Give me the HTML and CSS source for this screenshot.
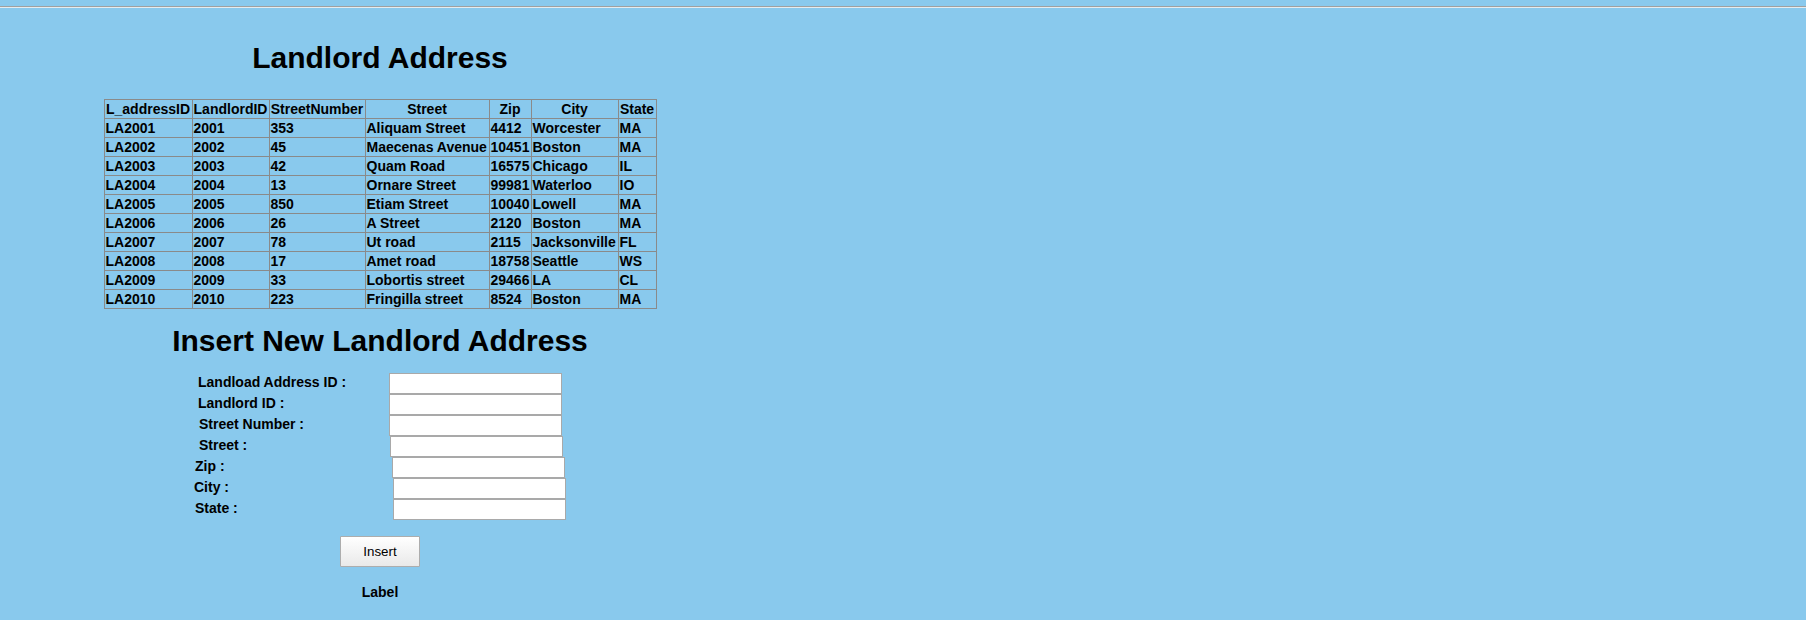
FILE: index.html
```html
<!DOCTYPE html>
<html>
<head>
<meta charset="utf-8">
<title>Landlord Address</title>
<link rel="stylesheet" href="styles.css">
</head>
<body>
<div class="topline"></div>
<div class="page">
  <h1 class="title">Landlord Address</h1>
  <table class="grid">
    <thead>
      <tr><th class="c1">L_addressID</th><th class="c2">LandlordID</th><th class="c3">StreetNumber</th><th class="c4">Street</th><th class="c5">Zip</th><th class="c6">City</th><th class="c7">State</th></tr>
    </thead>
    <tbody>
      <tr><td>LA2001</td><td>2001</td><td>353</td><td>Aliquam Street</td><td>4412</td><td>Worcester</td><td>MA</td></tr>
      <tr><td>LA2002</td><td>2002</td><td>45</td><td>Maecenas Avenue</td><td>10451</td><td>Boston</td><td>MA</td></tr>
      <tr><td>LA2003</td><td>2003</td><td>42</td><td>Quam Road</td><td>16575</td><td>Chicago</td><td>IL</td></tr>
      <tr><td>LA2004</td><td>2004</td><td>13</td><td>Ornare Street</td><td>99981</td><td>Waterloo</td><td>IO</td></tr>
      <tr><td>LA2005</td><td>2005</td><td>850</td><td>Etiam Street</td><td>10040</td><td>Lowell</td><td>MA</td></tr>
      <tr><td>LA2006</td><td>2006</td><td>26</td><td>A Street</td><td>2120</td><td>Boston</td><td>MA</td></tr>
      <tr><td>LA2007</td><td>2007</td><td>78</td><td>Ut road</td><td>2115</td><td>Jacksonville</td><td>FL</td></tr>
      <tr><td>LA2008</td><td>2008</td><td>17</td><td>Amet road</td><td>18758</td><td>Seattle</td><td>WS</td></tr>
      <tr><td>LA2009</td><td>2009</td><td>33</td><td>Lobortis street</td><td>29466</td><td>LA</td><td>CL</td></tr>
      <tr><td>LA2010</td><td>2010</td><td>223</td><td>Fringilla street</td><td>8524</td><td>Boston</td><td>MA</td></tr>
    </tbody>
  </table>
  <h2 class="title title-insert">Insert New Landlord Address</h2>
  <form class="form">
    <div class="row"><label class="lbl lbl-1">Landload Address ID :</label><input class="field" type="text"></div>
    <div class="row"><label class="lbl lbl-1">Landlord ID :</label><input class="field" type="text"></div>
    <div class="row"><label class="lbl lbl-3">Street Number :</label><input class="field" type="text"></div>
    <div class="row"><label class="lbl lbl-4">Street :</label><input class="field" type="text"></div>
    <div class="row"><label class="lbl lbl-5">Zip :</label><input class="field" type="text"></div>
    <div class="row"><label class="lbl lbl-6">City :</label><input class="field" type="text"></div>
    <div class="row"><label class="lbl lbl-7">State :</label><input class="field" type="text"></div>
  </form>
  <button class="btn" type="button">Insert</button>
  <span class="msg">Label</span>
</div>
</body>
</html>
```
FILE: styles.css
```css
html, body {
  margin: 0;
  padding: 0;
}
body {
  background: #89c9ed;
  font-family: "Liberation Sans", Arial, sans-serif;
  color: #000;
  height: 620px;
  overflow: hidden;
}
.topline {
  margin-top: 6px;
  border-top: 1px solid #a0a0a0;
  border-bottom: 1px solid #e4ecf0;
}
.page {
  width: 744px;
  margin-left: 8px;
  display: flex;
  flex-direction: column;
  align-items: center;
}
.title {
  margin: 33px 0 0 0;
  font-size: 30px;
  line-height: 34px;
  font-weight: bold;
}
.title-insert {
  margin-top: 15px;
}
.grid {
  margin-top: 24px;
  border-collapse: collapse;
  border: 1px solid #8a8a8a;
  font-size: 14px;
  font-weight: bold;
}
.grid th, .grid td {
  border: 1px solid #8a8a8a;
  padding: 1px;
  line-height: 16px;
  white-space: nowrap;
}
.grid th {
  text-align: center;
}
.grid td {
  text-align: left;
}
.grid .c1 { width: 85px; }
.grid .c2 { width: 74px; }
.grid .c3 { width: 93px; }
.grid .c4 { width: 121px; }
.grid .c5 { width: 39px; }
.grid .c6 { width: 84px; }
.grid .c7 { width: 35px; }
.form {
  align-self: flex-start;
  margin: 15px 0 0 186px;
  display: flex;
  flex-direction: column;
}
.row {
  display: flex;
  height: 21px;
  align-items: flex-start;
}
.lbl {
  box-sizing: border-box;
  font-size: 14px;
  font-weight: bold;
  line-height: 19px;
  white-space: nowrap;
}
.lbl-1 { width: 195px; padding-left: 4px; }
.lbl-3 { width: 195px; padding-left: 5px; }
.lbl-4 { width: 196px; padding-left: 5px; }
.lbl-5 { width: 198px; padding-left: 1px; }
.lbl-6 { width: 199px; padding-left: 0; }
.lbl-7 { width: 199px; padding-left: 1px; }
.field {
  box-sizing: border-box;
  width: 173px;
  height: 21px;
  margin: 0;
  padding: 0 2px;
  border: 1px solid #a9a9a9;
  background: #fff;
  font-family: "Liberation Sans", Arial, sans-serif;
  font-size: 13px;
}
.btn {
  margin-top: 16px;
  box-sizing: border-box;
  width: 80px;
  height: 31px;
  padding: 0;
  border: 1px solid #adadad;
  border-radius: 1px;
  background: linear-gradient(#ffffff, #e9e9e9);
  font-family: "Liberation Sans", Arial, sans-serif;
  font-size: 13.33px;
  color: #000;
}
.msg {
  margin-top: 17px;
  font-size: 14px;
  font-weight: bold;
  line-height: 16px;
}
```
